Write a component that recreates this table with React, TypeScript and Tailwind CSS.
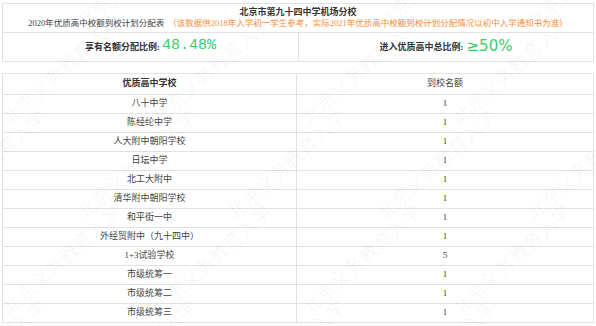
import React from "react";

const schools = [
  { name: "八十中学", quota: "1" },
  { name: "陈经纶中学", quota: "1" },
  { name: "人大附中朝阳学校", quota: "1" },
  { name: "日坛中学", quota: "1" },
  { name: "北工大附中", quota: "1" },
  { name: "清华附中朝阳学校", quota: "1" },
  { name: "和平街一中", quota: "1" },
  { name: "外经贸附中（九十四中）", quota: "1" },
  { name: "1+3试验学校", quota: "5" },
  { name: "市级统筹一", quota: "1" },
  { name: "市级统筹二", quota: "1" },
  { name: "市级统筹三", quota: "1" },
];

// faint diagonal watermark tiles
const marks: { left: number; top: number }[] = [];
for (let r = 0; r < 5; r++) {
  for (let c = 0; c < 6; c++) {
    marks.push({ left: c * 150 - 90 + (r % 2) * 75, top: r * 95 - 40 });
  }
}

export default function App() {
  return (
    <div className="relative w-[596px] h-[326px] overflow-hidden bg-white text-[#444] font-['Liberation_Serif','Noto_Sans_CJK_SC',serif]">
      <div className="px-[2px] pt-[3px]">
        <div className="border border-[#e2e2e2]">
          <div className="h-[28px] flex flex-col items-center justify-center leading-[11px]">
            <div className="text-[9px] font-bold text-[#333]">北京市第九十四中学机场分校</div>
            <div className="text-[8.5px] whitespace-nowrap">
              2020年优质高中校额到校计划分配表
              <span className="ml-[4px] text-[#f7903a]">
                （该数据供2018年入学初一学生参考，实际2021年优质高中校额到校计划分配情况以初中入学通知书为准）
              </span>
            </div>
          </div>
          <div className="grid grid-cols-[295px_1fr] h-[29px] border-t border-[#e2e2e2]">
            <div className="flex items-end justify-center pb-[7px]">
              <span className="text-[9px] font-bold text-[#333]">享有名额分配比例:</span>
              <span className="ml-[2px] text-[15px] leading-[16px] text-[#3acb6b] font-['Liberation_Mono',monospace]">
                48.48%
              </span>
            </div>
            <div className="flex items-end justify-center pb-[7px] border-l border-[#e2e2e2]">
              <span className="text-[9px] font-bold text-[#333]">进入优质高中总比例:</span>
              <span className="ml-[3px] text-[15px] leading-[16px] text-[#3acb6b] font-['DejaVu_Sans',sans-serif]">
                ≥50%
              </span>
            </div>
          </div>
        </div>

        <div className="mt-[11px] border border-[#e2e2e2] text-[9px]">
          <div className="grid grid-cols-[293px_1fr] h-[20px]">
            <div className="flex items-center justify-center font-bold text-[#333]">优质高中学校</div>
            <div className="flex items-center justify-center border-l border-[#e2e2e2]">到校名额</div>
          </div>
          {schools.map((s) => (
            <div key={s.name} className="grid grid-cols-[293px_1fr] h-[19px] border-t border-[#e2e2e2]">
              <div className="flex items-center justify-center">{s.name}</div>
              <div className="flex items-center justify-center border-l border-[#e2e2e2]">{s.quota}</div>
            </div>
          ))}
        </div>
      </div>

      <div className="pointer-events-none absolute inset-0">
        {marks.map((m, i) => (
          <span
            key={i}
            className="absolute whitespace-nowrap text-[19px] text-[#000]/[0.045] -rotate-[42deg] origin-center font-['Noto_Sans_CJK_SC',sans-serif]"
            style={{ left: m.left, top: m.top }}
          >
            北京义务教育入学
          </span>
        ))}
      </div>
    </div>
  );
}
